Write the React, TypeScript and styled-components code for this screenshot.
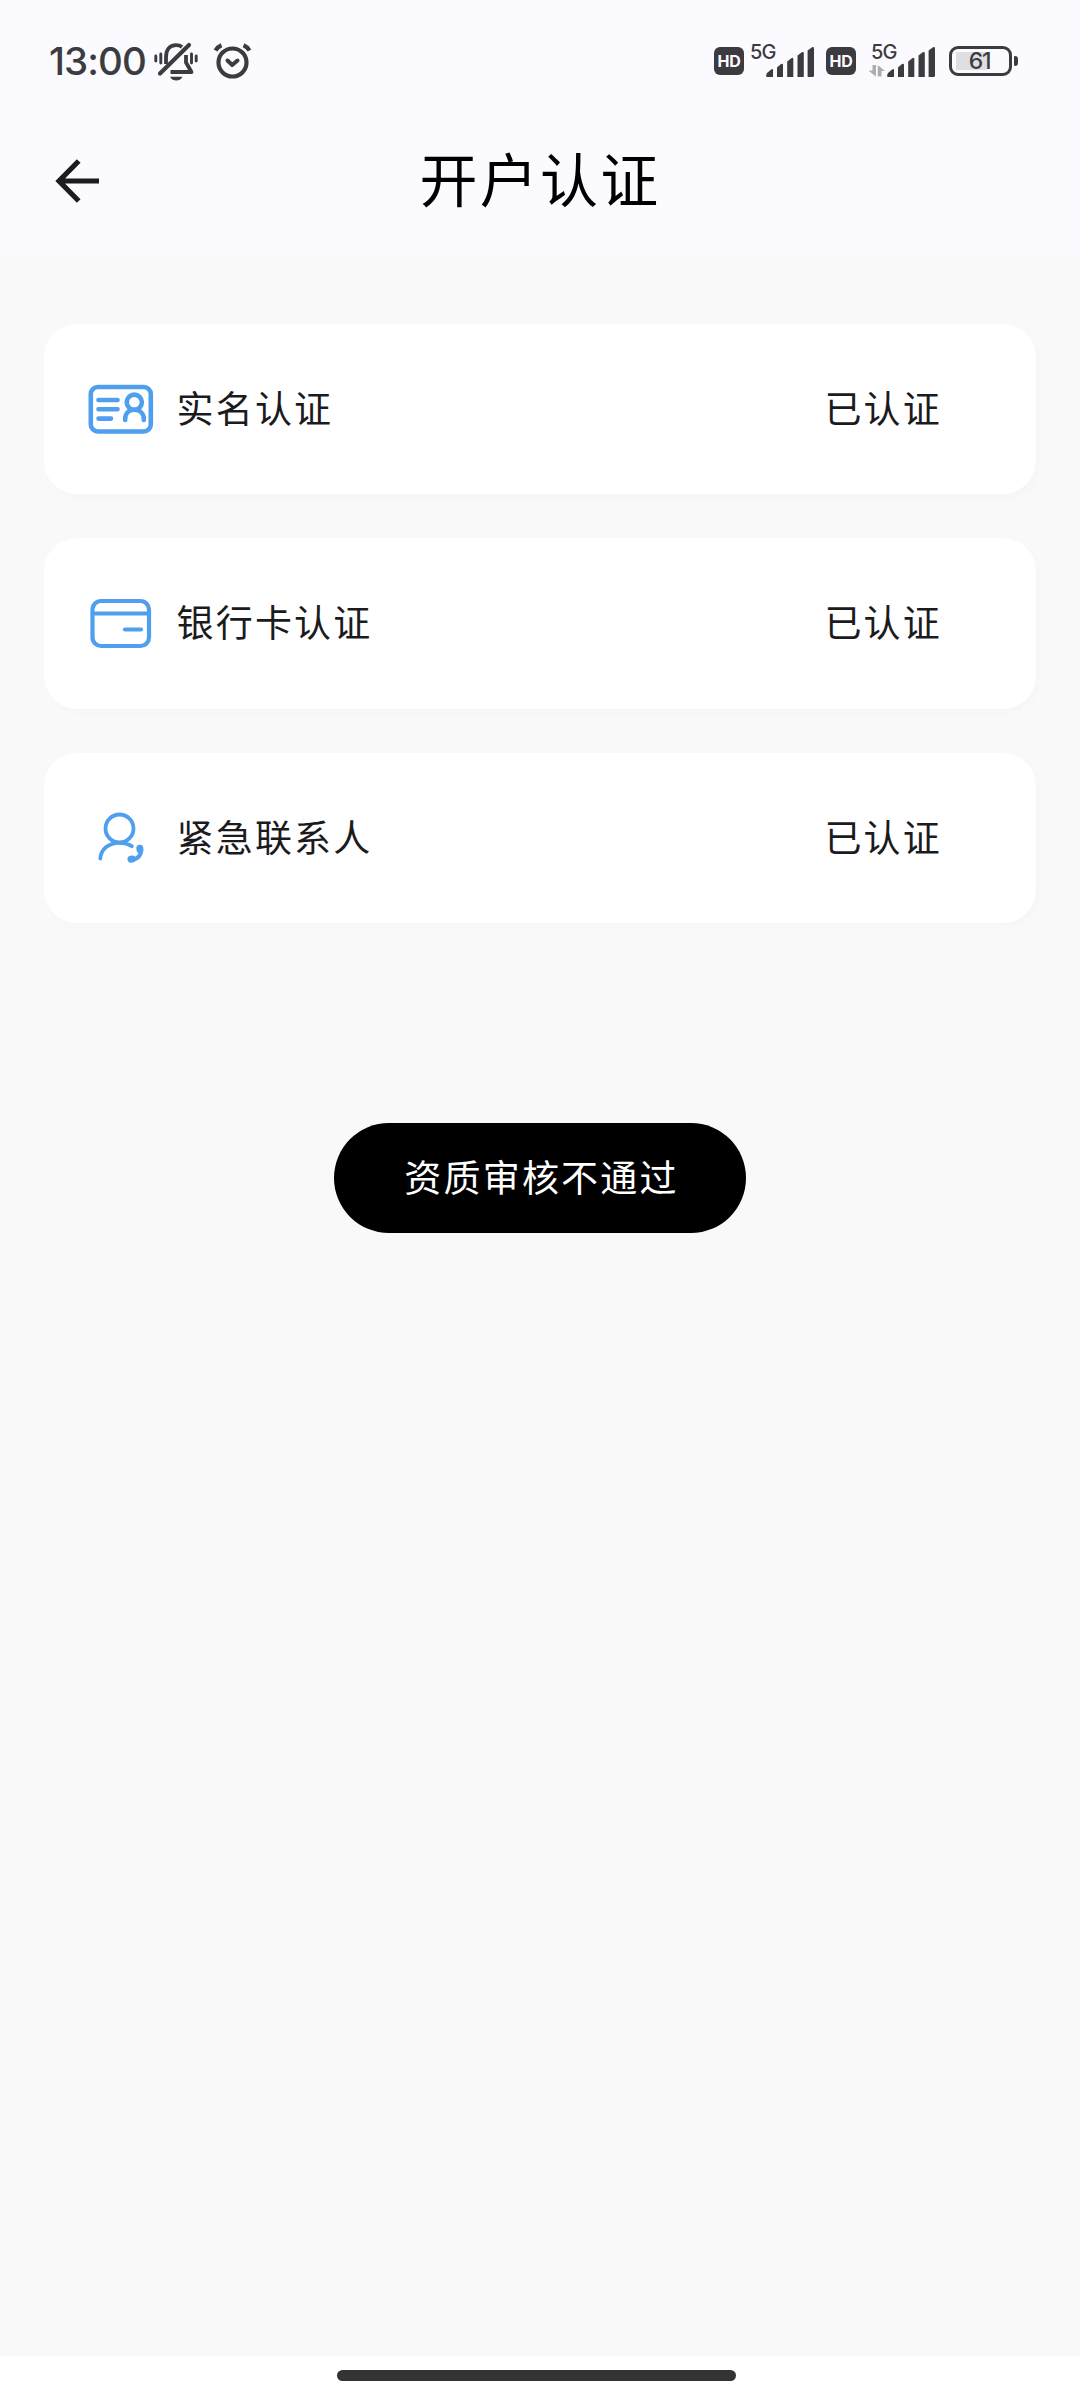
import React from "react";
import styled, { createGlobalStyle } from "styled-components";

const INK = "#3b3b40";
const BLUE = "#4f9fee";

const GlobalStyle = createGlobalStyle`
  * { box-sizing: border-box; }
  body {
    margin: 0;
    background: #f9f9f9;
    font-family: Inter, "Noto Sans CJK SC", sans-serif;
  }
`;

const Screen = styled.div`
  position: relative;
  display: flex;
  flex-direction: column;
  width: 1080px;
  height: 2400px;
  background: #f9f9f9;
  overflow: hidden;
`;

const Header = styled.header`
  height: 256px;
  flex: none;
  background: #fbfaff;
`;

const StatusBar = styled.div`
  display: flex;
  align-items: flex-start;
  justify-content: space-between;
  height: 103px;
  padding: 42px 62px 0 49px;
  color: ${INK};
`;

const StatusGroup = styled.div`
  display: flex;
  align-items: flex-start;
  height: 40px;
`;

const Clock = styled.span`
  width: 105px;
  font-size: 38.5px;
  line-height: 38px;
  font-weight: 450;
  letter-spacing: -0.9px;
  white-space: nowrap;
`;

const AlarmSlot = styled.span`
  display: flex;
  margin-left: 14px;
`;

const HdBadge = styled.span<{ $gap: number }>`
  display: flex;
  align-items: center;
  justify-content: center;
  width: 30px;
  height: 28px;
  margin: 5px ${(p) => p.$gap}px 0 0;
  border-radius: 6px;
  background: ${INK};
  color: #fbfaff;
  font-size: 16px;
  line-height: 28px;
  font-weight: 700;
  letter-spacing: -0.3px;
`;

const Signal = styled.span<{ $width: number; $gap: number }>`
  position: relative;
  display: flex;
  justify-content: flex-end;
  width: ${(p) => p.$width}px;
  height: 40px;
  margin-right: ${(p) => p.$gap}px;
`;

const Network = styled.span<{ $left: number }>`
  position: absolute;
  left: ${(p) => p.$left}px;
  top: 0;
  font-size: 20px;
  line-height: 20px;
  font-weight: 450;
  letter-spacing: -0.8px;
`;

const Battery = styled.span`
  display: flex;
  align-items: center;
  gap: 2px;
  height: 30px;
  margin-top: 4px;
`;

const BatteryBody = styled.span`
  display: flex;
  align-items: center;
  justify-content: center;
  width: 63px;
  height: 30px;
  padding-right: 2px;
  border: 3px solid ${INK};
  border-radius: 9px;
  background: linear-gradient(#dfdee3, #dfdee3) 4px 3px / 31px 18px no-repeat;
  font-size: 23px;
  line-height: 24px;
  font-weight: 450;
  letter-spacing: -1.2px;
`;

const BatteryTip = styled.span`
  width: 4px;
  height: 10px;
  border-radius: 1px 3px 3px 1px;
  background: ${INK};
`;

const Toolbar = styled.div`
  display: grid;
  grid-template-columns: 60px 1fr 60px;
  align-items: center;
  height: 155px;
  padding: 0 48px;
`;

const BackButton = styled.button`
  display: flex;
  padding: 0 0 0 7px;
  border: 0;
  background: none;
`;

const Title = styled.h1`
  margin: 0;
  text-align: center;
  font-size: 58px;
  line-height: 80px;
  font-weight: 400;
  letter-spacing: 2.2px;
  color: #000;
`;

const CardList = styled.main`
  display: flex;
  flex: 1;
  flex-direction: column;
  gap: 44px;
  padding: 67.5px 44px 0;
`;

const Card = styled.section`
  display: flex;
  align-items: center;
  height: 170.5px;
  padding: 0 94px 0 44px;
  border-radius: 33px;
  background: #fff;
  box-shadow: 3px 4px 8px rgba(0, 0, 0, 0.014);
`;

const IconBox = styled.span`
  display: flex;
  flex: none;
  width: 66px;
  height: 66px;
  margin-right: 22.5px;
`;

const Label = styled.span`
  flex: 1;
  padding-top: 1.5px;
  font-size: 37px;
  line-height: 54px;
  letter-spacing: 2.2px;
  color: #1b1b1e;
`;

const StatusText = styled(Label)`
  flex: none;
`;

const Toast = styled.div`
  position: absolute;
  left: 334px;
  top: 1123px;
  display: flex;
  align-items: center;
  justify-content: center;
  width: 412px;
  height: 110px;
  padding: 1px 0 0 3px;
  border-radius: 55px;
  background: #000;
  color: #fff;
  font-size: 37px;
  line-height: 54px;
  letter-spacing: 2.2px;
  white-space: nowrap;
`;

const GestureBar = styled.footer`
  display: flex;
  justify-content: center;
  height: 44px;
  padding: 14px 7px 0 0;
  background: #fff;
`;

const GestureHandle = styled.span`
  width: 399px;
  height: 11px;
  border-radius: 6px;
  background: #333;
`;

const MutedBell = () => (
  <svg width="44" height="40" viewBox="0 0 44 40" fill="none" stroke={INK} strokeWidth="3.8" strokeLinecap="round" strokeLinejoin="round">
    <path d="M6 31.500 35 3" strokeWidth="4.200" />
    <path d="M12 22V15.500C12 8 15.500 3.200 22 3.200C24.500 3.200 26.500 3.800 28 5" strokeLinecap="butt" />
    <path d="M32 13V20.500L37.500 30H16.500" strokeLinecap="butt" />
    <path d="M1.800 14V19M6.800 12V21M37.500 12V21M42.200 14V19" strokeWidth="2.900" />
    <path d="M16 34.800H28.500C27 37.500 25 38.600 22.300 38.600S17.500 37.500 16 34.800Z" fill={INK} stroke="none" />
  </svg>
);

const Alarm = () => (
  <svg width="41" height="40" viewBox="0 0 41 40" fill="none" stroke={INK} strokeWidth="4.200" strokeLinecap="round" strokeLinejoin="round">
    <circle cx="20.500" cy="20.500" r="14" />
    <path d="M15.500 18.500 20.200 23 25.500 18.500" strokeWidth="4" />
    <path d="M3.500 8.500C5 6 7 4.200 9.500 3.200M37.500 8.500C36 6 34 4.200 31.500 3.200" strokeLinecap="butt" />
  </svg>
);

const SignalBars = () => (
  <svg width="48" height="40" viewBox="0 0 48 40" fill={INK}>
    <path d="M1 31 5.500 27.200Q7 26.500 7 28V35H1.500Q0 35 0 33.500Z" />
    <path d="M11 25.500 15 22Q17 21 17 23V35H11Z" />
    <path d="M21.200 19.500 25.300 16.200Q27.300 15 27.300 17V35H21.200Z" />
    <path d="M31.500 13.500 35.800 10.300Q37.800 9.500 37.800 11.500V35H31.500Z" />
    <path d="M41.600 8.500 46 5.300Q48 4.500 48 6.500V33.500Q48 35 46.500 35H41.600Z" />
  </svg>
);

const DataArrows = () => (
  <svg width="18" height="40" viewBox="0 0 18 40" fill="#acabb0">
    <path d="M3.500 23H7V34.500L-0.500 28.500H3.500Z" />
    <path d="M12.500 34.500H8.800V23L16 29H12.500Z" />
  </svg>
);

const BackArrow = () => (
  <svg width="46" height="46" viewBox="0 0 46 46" fill="none" stroke="#1c1b20" strokeWidth="5.200">
    <path d="M44 23H4M23.700 3 4 23 23.700 43" />
  </svg>
);

const IdentityIcon = () => (
  <svg width="66" height="66" viewBox="0 0 66 66" fill="none" stroke={BLUE} strokeWidth="4.600" strokeLinecap="round">
    <rect x="2.800" y="11" width="60" height="44.500" rx="7" />
    <path d="M10.500 24H29.500M10.500 33.300H29.500M10.500 42.600H23" />
    <circle cx="46.300" cy="26.200" r="7.600" />
    <path d="M37.200 44V43C37.200 37.500 40.800 33.800 46.300 33.800S55.800 37.500 55.800 43V44" />
  </svg>
);

const BankCardIcon = () => (
  <svg width="66" height="66" viewBox="0 0 66 66" fill="none" stroke={BLUE} strokeWidth="4.200" strokeLinecap="round">
    <rect x="4.500" y="11" width="56.500" height="45" rx="8.500" />
    <path d="M5 23.500H60" />
    <path d="M37 39.500H53" />
  </svg>
);

const ContactIcon = () => (
  <svg width="66" height="66" viewBox="0 0 66 66" fill="none" stroke={BLUE} strokeWidth="3.800" strokeLinecap="round">
    <circle cx="31.500" cy="23.500" r="14" />
    <path d="M12.300 53.500C13 44 21 37.800 31 37.800C36 37.800 40.500 39 43.800 41.200" />
    <path d="M52.200 43.300C54.500 49.500 49.500 55 43 54.200" strokeWidth="4.200" />
    <path d="M51.800 43.300 52 44.800M43 54.200 44.200 54" strokeWidth="7" />
  </svg>
);

const rows = [
  { label: "实名认证", status: "已认证", Icon: IdentityIcon },
  { label: "银行卡认证", status: "已认证", Icon: BankCardIcon },
  { label: "紧急联系人", status: "已认证", Icon: ContactIcon },
];

export default function App() {
  return (
    <Screen>
      <GlobalStyle />
      <Header>
        <StatusBar>
          <StatusGroup>
            <Clock>13:00</Clock>
            <MutedBell />
            <AlarmSlot>
              <Alarm />
            </AlarmSlot>
          </StatusGroup>
          <StatusGroup>
            <HdBadge $gap={7}>HD</HdBadge>
            <Signal $width={63} $gap={12}>
              <Network $left={-1}>5G</Network>
              <SignalBars />
            </Signal>
            <HdBadge $gap={13}>HD</HdBadge>
            <Signal $width={66} $gap={14}>
              <Network $left={2}>5G</Network>
              <DataArrows />
              <SignalBars />
            </Signal>
            <Battery>
              <BatteryBody>61</BatteryBody>
              <BatteryTip />
            </Battery>
          </StatusGroup>
        </StatusBar>
        <Toolbar>
          <BackButton aria-label="返回">
            <BackArrow />
          </BackButton>
          <Title>开户认证</Title>
        </Toolbar>
      </Header>
      <CardList>
        {rows.map(({ label, status, Icon }) => (
          <Card key={label}>
            <IconBox>
              <Icon />
            </IconBox>
            <Label>{label}</Label>
            <StatusText>{status}</StatusText>
          </Card>
        ))}
      </CardList>
      <GestureBar>
        <GestureHandle />
      </GestureBar>
      <Toast role="status">资质审核不通过</Toast>
    </Screen>
  );
}
